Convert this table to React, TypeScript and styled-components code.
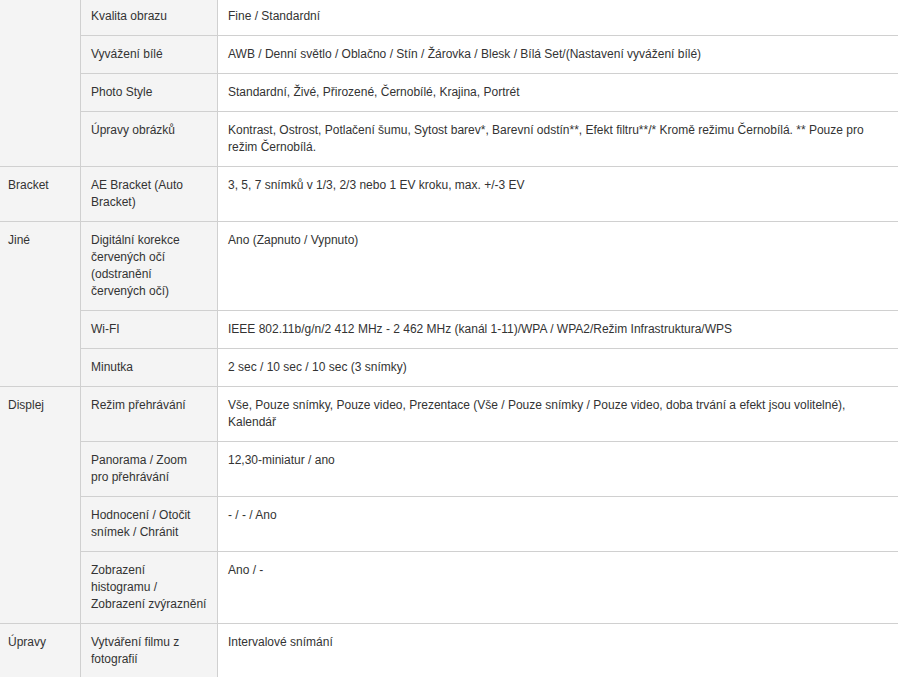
import React from 'react';
import styled, { createGlobalStyle } from 'styled-components';

const GlobalStyle = createGlobalStyle`
  html, body {
    margin: 0;
    padding: 0;
    background: #fff;
  }
  body {
    font-family: "Liberation Sans", Arial, sans-serif;
    font-size: 12px;
    line-height: 17px;
    color: #333;
    overflow: hidden;
  }
`;

const SpecTable = styled.div`
  display: flex;
  flex-direction: column;
  margin-top: -2px;
  width: 898px;
`;

const Group = styled.div`
  display: flex;
  border-bottom: 1px solid #d0d0d0;
`;

const GroupLabel = styled.div`
  flex: none;
  width: 81px;
  box-sizing: border-box;
  padding: 10px 8px;
  background: #f4f4f4;
  border-right: 1px solid #d0d0d0;
`;

const Rows = styled.div`
  flex: 1;
  display: flex;
  flex-direction: column;
`;

const Row = styled.div`
  display: flex;
  border-bottom: 1px solid #d0d0d0;

  &:last-child {
    border-bottom: none;
  }
`;

const RowLabel = styled.div`
  flex: none;
  width: 137px;
  box-sizing: border-box;
  padding: 10px;
  background: #f4f4f4;
  border-right: 1px solid #d0d0d0;
`;

const RowValue = styled.div`
  flex: 1;
  padding: 10px;
  background: #fff;
`;

interface Spec {
  label: string;
  value: string;
}

interface SpecGroup {
  title: string;
  rows: Spec[];
}

const groups: SpecGroup[] = [
  {
    title: '',
    rows: [
      { label: 'Kvalita obrazu', value: 'Fine / Standardní' },
      { label: 'Vyvážení bílé', value: 'AWB / Denní světlo / Oblačno / Stín / Žárovka / Blesk / Bílá Set/(Nastavení vyvážení bílé)' },
      { label: 'Photo Style', value: 'Standardní, Živé, Přirozené, Černobílé, Krajina, Portrét' },
      { label: 'Úpravy obrázků', value: 'Kontrast, Ostrost, Potlačení šumu, Sytost barev*, Barevní odstín**, Efekt filtru**/* Kromě režimu Černobílá. ** Pouze pro režim Černobílá.' },
    ],
  },
  {
    title: 'Bracket',
    rows: [
      { label: 'AE Bracket (Auto Bracket)', value: '3, 5, 7 snímků v 1/3, 2/3 nebo 1 EV kroku, max. +/-3 EV' },
    ],
  },
  {
    title: 'Jiné',
    rows: [
      { label: 'Digitální korekce červených očí (odstranění červených očí)', value: 'Ano (Zapnuto / Vypnuto)' },
      { label: 'Wi-FI', value: 'IEEE 802.11b/g/n/2 412 MHz - 2 462 MHz (kanál 1-11)/WPA / WPA2/Režim Infrastruktura/WPS' },
      { label: 'Minutka', value: '2 sec / 10 sec / 10 sec (3 snímky)' },
    ],
  },
  {
    title: 'Displej',
    rows: [
      { label: 'Režim přehrávání', value: 'Vše, Pouze snímky, Pouze video, Prezentace (Vše / Pouze snímky / Pouze video, doba trvání a efekt jsou volitelné), Kalendář' },
      { label: 'Panorama / Zoom pro přehrávání', value: '12,30-miniatur / ano' },
      { label: 'Hodnocení / Otočit snímek / Chránit', value: '- / - / Ano' },
      { label: 'Zobrazení histogramu / Zobrazení zvýraznění', value: 'Ano / -' },
    ],
  },
  {
    title: 'Úpravy',
    rows: [
      { label: 'Vytváření filmu z fotografií', value: 'Intervalové snímání' },
    ],
  },
];

export default function App() {
  return (
    <>
      <GlobalStyle />
      <SpecTable>
        {groups.map((g, gi) => (
          <Group key={gi}>
            <GroupLabel>{g.title}</GroupLabel>
            <Rows>
              {g.rows.map((r, ri) => (
                <Row key={ri}>
                  <RowLabel>{r.label}</RowLabel>
                  <RowValue>{r.value}</RowValue>
                </Row>
              ))}
            </Rows>
          </Group>
        ))}
      </SpecTable>
    </>
  );
}
